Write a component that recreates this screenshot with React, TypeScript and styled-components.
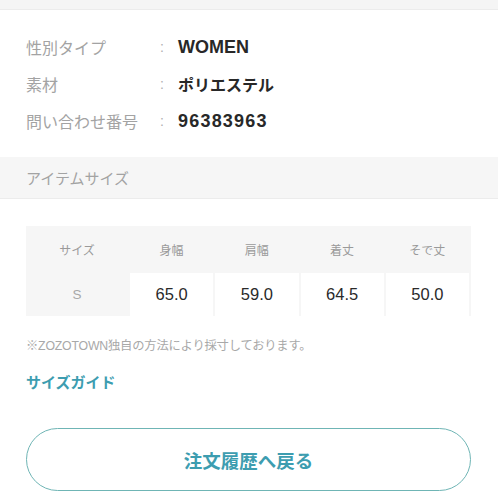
import React from "react";
import styled, { createGlobalStyle } from "styled-components";

const Global = createGlobalStyle`
  html, body { margin: 0; padding: 0; background: #fff; }
  body { font-family: "Liberation Sans", "Noto Sans CJK JP", sans-serif; }
`;

const Page = styled.div`
  width: 498px;
  height: 498px;
  overflow: hidden;
  display: flex;
  flex-direction: column;
`;

const TopBand = styled.div`
  height: 9px;
  background: #f5f5f5;
  border-bottom: 1px solid #ececec;
`;

const InfoList = styled.div`
  display: flex;
  flex-direction: column;
  gap: 11px;
  padding: 24px 26px 0;
`;

const InfoRow = styled.div`
  display: grid;
  grid-template-columns: 134px 18px 1fr;
  align-items: center;
  height: 26px;
`;

const Label = styled.span`
  color: #a3a3a3;
  font-size: 16px;
`;

const Colon = styled.span`
  color: #b0b0b0;
  font-size: 14px;
`;

const Value = styled.span<{ $kind: "latin" | "digits" | "jp" }>`
  color: #282828;
  font-weight: bold;
  font-size: ${(p) => (p.$kind === "jp" ? "16px" : "18px")};
  letter-spacing: ${(p) => (p.$kind === "digits" ? "1.2px" : "0")};
`;

const SectionHead = styled.div`
  margin-top: 23px;
  height: 41px;
  background: #f6f6f6;
  border-bottom: 1px solid #ececec;
  display: flex;
  align-items: center;
  padding: 0 26px;
  color: #a3a3a3;
  font-size: 15px;
`;

const Table = styled.div`
  margin: 27px 27px 0 26px;
  background: #f6f6f6;
  display: grid;
  grid-template-columns: 102px repeat(4, 1fr);
  grid-template-rows: 47px 43px;
  column-gap: 2px;
  padding-right: 2px;
`;

const HeadCell = styled.div`
  display: flex;
  align-items: center;
  justify-content: center;
  color: #9a9a9a;
  font-size: 12px;
`;

const SizeCell = styled.div`
  display: flex;
  align-items: center;
  justify-content: center;
  color: #a8a8a8;
  font-size: 13.5px;
`;

const DataCell = styled.div`
  display: flex;
  align-items: center;
  justify-content: center;
  background: #fff;
  color: #2a2a2a;
  font-size: 16.5px;
`;

const Note = styled.div`
  margin: 20px 26px 0;
  color: #a8a8a8;
  font-size: 12.3px;
  letter-spacing: -0.2px;
`;

const GuideLink = styled.a`
  margin: 17px 26px 0;
  color: #3d9db0;
  font-size: 15px;
  font-weight: bold;
  text-decoration: none;
`;

const BackButton = styled.button`
  margin: 36px 27px 0 26px;
  height: 63px;
  border: 1.5px solid #6fb5b5;
  border-radius: 32px;
  background: #fff;
  color: #3d9db0;
  font-family: "Liberation Sans", "Noto Sans CJK JP", sans-serif;
  font-size: 18.5px;
  font-weight: bold;
  display: flex;
  align-items: center;
  justify-content: center;
  padding: 0;
`;

const info: [string, string, "latin" | "digits" | "jp"][] = [
  ["性別タイプ", "WOMEN", "latin"],
  ["素材", "ポリエステル", "jp"],
  ["問い合わせ番号", "96383963", "digits"],
];

const heads = ["サイズ", "身幅", "肩幅", "着丈", "そで丈"];
const values = ["65.0", "59.0", "64.5", "50.0"];

export default function App() {
  return (
    <Page>
      <Global />
      <TopBand />
      <InfoList>
        {info.map(([l, v, k]) => (
          <InfoRow key={l}>
            <Label>{l}</Label>
            <Colon>:</Colon>
            <Value $kind={k}>{v}</Value>
          </InfoRow>
        ))}
      </InfoList>
      <SectionHead>アイテムサイズ</SectionHead>
      <Table>
        {heads.map((h) => (
          <HeadCell key={h}>{h}</HeadCell>
        ))}
        <SizeCell>S</SizeCell>
        {values.map((v, i) => (
          <DataCell key={i}>{v}</DataCell>
        ))}
      </Table>
      <Note>※ZOZOTOWN独自の方法により採寸しております。</Note>
      <GuideLink>サイズガイド</GuideLink>
      <BackButton>注文履歴へ戻る</BackButton>
    </Page>
  );
}
